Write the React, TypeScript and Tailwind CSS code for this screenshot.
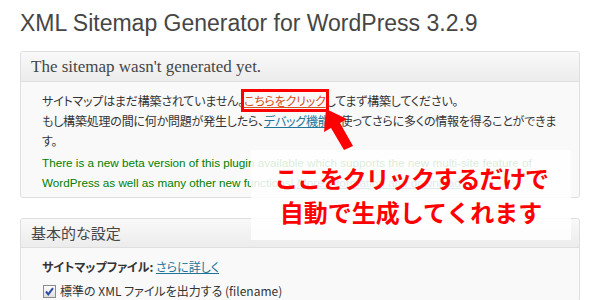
import React from 'react';

const jp = "font-['Noto_Sans_CJK_JP',sans-serif] [font-feature-settings:'palt']";

function Arrow() {
    return (
        <svg
            className="absolute left-[calc(100%-6px)] top-[calc(100%-3px)] z-10"
            width="40"
            height="46"
            viewBox="0 0 40 46"
        >
            <polygon points="6,3 27,13 20,17 33,40 24,44 11,22 4,26" fill="#ff0000" />
        </svg>
    );
}

function CheckBox() {
    return (
        <svg width="13" height="13" viewBox="0 0 13 13" className="shrink-0">
            <defs>
                <linearGradient id="cb" x1="0" y1="0" x2="0" y2="1">
                    <stop offset="0" stopColor="#ffffff" />
                    <stop offset="1" stopColor="#dcdcdc" />
                </linearGradient>
            </defs>
            <rect x="0.5" y="0.5" width="12" height="12" fill="url(#cb)" stroke="#8c8c8c" />
            <path d="M3 6.5 L5.3 9.3 L10 3.2" fill="none" stroke="#2b4aa8" strokeWidth="2" />
        </svg>
    );
}

export default function App() {
    return (
        <div className="relative w-[600px] h-[300px] overflow-hidden bg-white px-5 text-[#333]">
            {/* page title */}
            <h2 className="pt-[9px] text-[23px] leading-[29px] text-[#464646] font-['Liberation_Sans',Arial,sans-serif]">
                XML Sitemap Generator for WordPress 3.2.9
            </h2>

            {/* status box */}
            <div className="mt-[13px] border border-[#dfdfdf] rounded-[3px] bg-[#f9f9f9]">
                <div className="h-[30px] flex items-center px-[10px] border-b border-[#dfdfdf] bg-gradient-to-b from-[#f9f9f9] to-[#ececec] rounded-t-[3px]">
                    <h3 className="text-[17px] text-[#464646] font-['Liberation_Serif',serif]">
                        The sitemap wasn't generated yet.
                    </h3>
                </div>
                <div className={`pt-[9px] pb-[4px] pl-[21px] pr-[12px] text-[12px] leading-[20px] tracking-[-0.2px] ${jp}`}>
                    <p>
                        サイトマップはまだ構築されていません。
                        <span className="relative">
                            <a className="text-[#d54e21] underline outline-solid outline-[3px] outline-[#ff0000]">
                                こちらをクリック
                            </a>
                            <Arrow />
                        </span>
                        してまず構築してください。
                    </p>
                    <p>
                        もし構築処理の間に何か問題が発生したら、
                        <a className="text-[#21759b] underline">デバッグ機能</a>
                        を使ってさらに多くの情報を得ることができます。
                    </p>
                    <p className="mt-[2px] pr-[8px] text-[#008000] text-[11.7px] tracking-normal font-['Liberation_Sans',Arial,sans-serif]">
                        There is a new beta version of this plugin available which supports the new multi-site feature of WordPress as well as many other new functions!{' '}
                        <a className="text-[#21759b] underline">More information and download</a>
                    </p>
                </div>
            </div>

            {/* basic settings box */}
            <div className="mt-5 border border-[#dfdfdf] rounded-[3px] bg-[#f9f9f9]">
                <div className="h-[29px] flex items-center px-[10px] border-b border-[#dfdfdf] bg-gradient-to-b from-[#f9f9f9] to-[#ececec] rounded-t-[3px]">
                    <h3 className={`text-[15px] text-[#464646] ${jp}`}>基本的な設定</h3>
                </div>
                <div className={`pt-[9px] pl-[21px] text-[12px] leading-[20px] ${jp}`}>
                    <p>
                        <b>サイトマップファイル:</b>{' '}
                        <a className="text-[#21759b] underline">さらに詳しく</a>
                    </p>
                    <label className="mt-1 flex items-center gap-[4px] pl-px">
                        <CheckBox />
                        <span>標準の XML ファイルを出力する (filename)</span>
                    </label>
                </div>
            </div>

            {/* annotation overlay */}
            <div className="absolute left-[251px] top-[150px] z-20 w-[320px] h-[90px] bg-white/85 flex flex-col items-center justify-center font-['Noto_Sans_CJK_JP',sans-serif] text-[24px] leading-[34px] font-bold text-[#ff0000]">
                <p className="tracking-[-1.2px]">ここをクリックするだけで</p>
                <p>自動で生成してくれます</p>
            </div>
        </div>
    );
}
